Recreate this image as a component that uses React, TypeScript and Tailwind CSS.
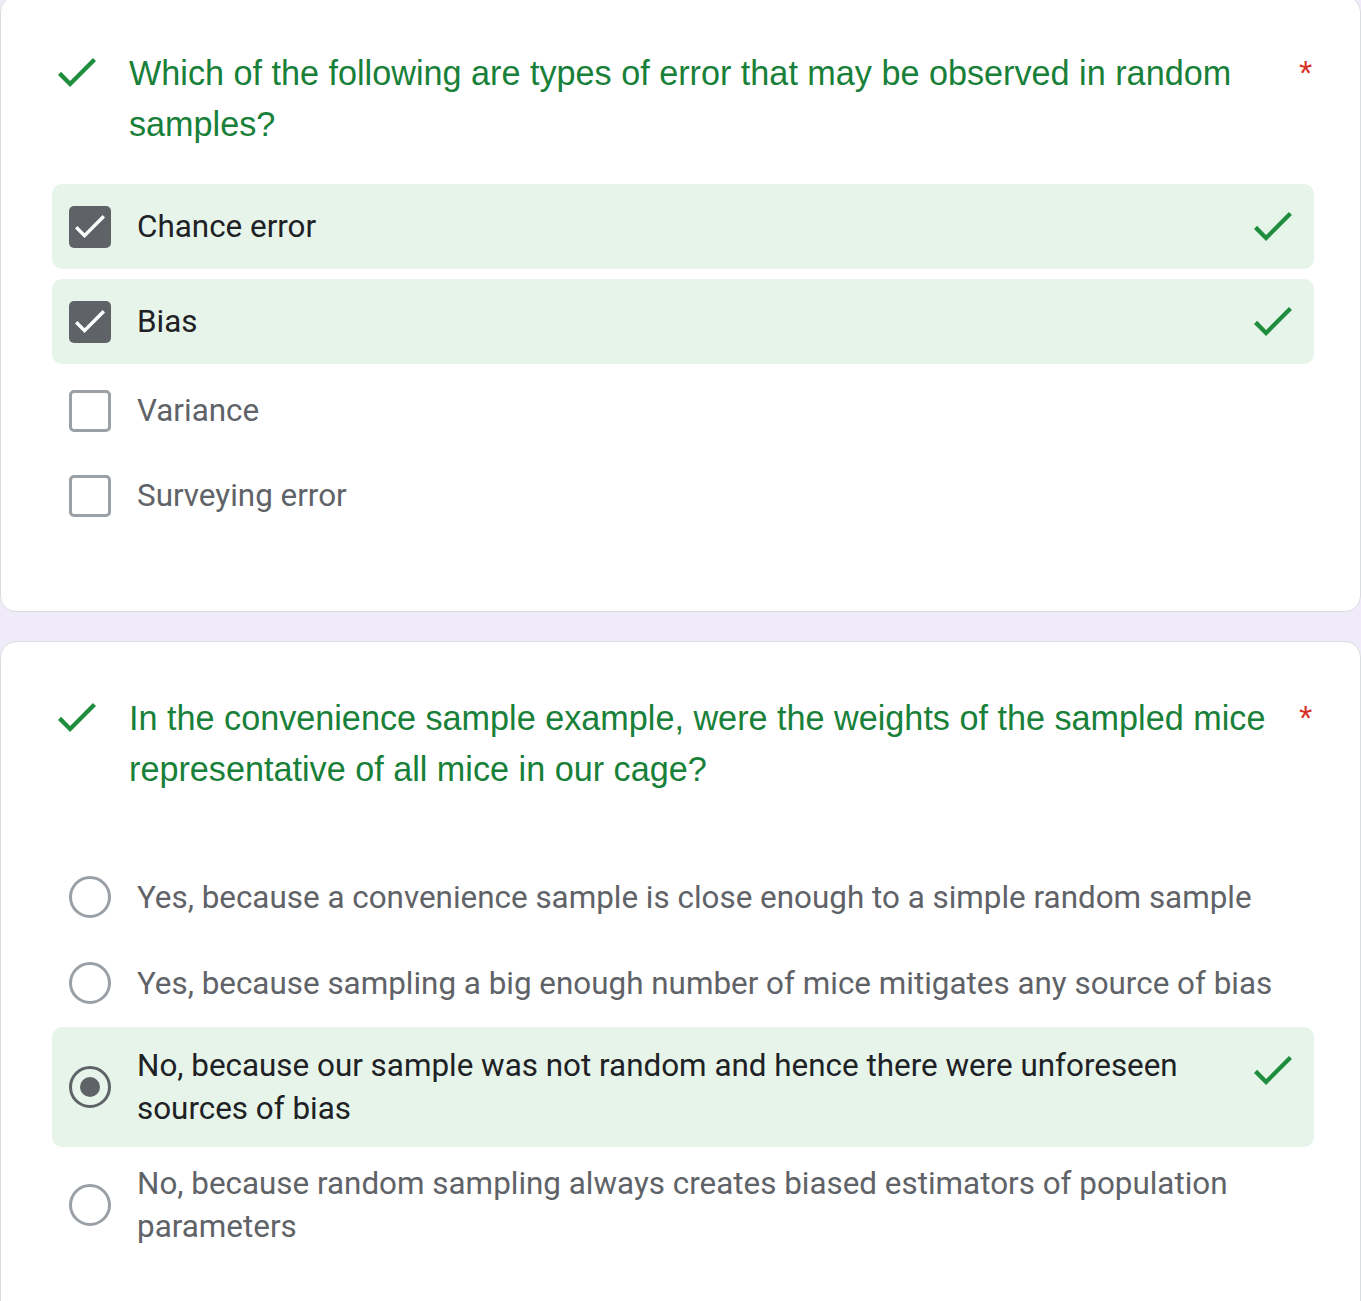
import React from "react";

type CheckOption = { label: string; checked: boolean; correct: boolean; wrap: string };
type RadioOption = { label: string; selected: boolean; correct: boolean; wrap: string };

const checkOptions: CheckOption[] = [
  { label: "Chance error", checked: true, correct: true, wrap: "h-[85px] mb-[10px] items-center" },
  { label: "Bias", checked: true, correct: true, wrap: "h-[85px] items-center" },
  { label: "Variance", checked: false, correct: false, wrap: "h-[85px] mt-[4px] items-center" },
  { label: "Surveying error", checked: false, correct: false, wrap: "h-[85px] items-center" },
];

const radioOptions: RadioOption[] = [
  {
    label: "Yes, because a convenience sample is close enough to a simple random sample",
    selected: false,
    correct: false,
    wrap: "h-[86px] items-center",
  },
  {
    label: "Yes, because sampling a big enough number of mice mitigates any source of bias",
    selected: false,
    correct: false,
    wrap: "h-[86px] items-center",
  },
  {
    label: "No, because our sample was not random and hence there were unforeseen sources of bias",
    selected: true,
    correct: true,
    wrap: "mt-[1px] py-[17px] items-center",
  },
  {
    label: "No, because random sampling always creates biased estimators of population parameters",
    selected: false,
    correct: false,
    wrap: "pt-[15px] pb-[16px] items-center",
  },
];

// material "check" glyph, cropped to its own bounds
function Tick({ className }: { className?: string }) {
  return (
    <svg viewBox="3.41 5.59 17.59 13.41" className={className} fill="currentColor" preserveAspectRatio="none">
      <path d="M9 16.17L4.83 12l-1.42 1.41L9 19 21 7l-1.41-1.41z" />
    </svg>
  );
}

function QuestionTitle({ children }: { children: React.ReactNode }) {
  return (
    <div className="flex items-start pl-[57px] pr-[47px] font-['Liberation_Sans',Arial,sans-serif] text-[34.2px] leading-[51px]">
      <Tick className="mt-[10px] h-[29px] w-[38px] shrink-0 text-[#1e8e3e]" />
      <div className="ml-[33px] flex-1 text-[#188038]">{children}</div>
      <span className="ml-[14px] w-[14px] text-[#d93025]">*</span>
    </div>
  );
}

function Checkbox({ checked }: { checked: boolean }) {
  if (checked) {
    return (
      <div className="flex size-[42px] shrink-0 items-center justify-center rounded-[5px] bg-[#5f6368]">
        <Tick className="h-[23px] w-[30px] text-white" />
      </div>
    );
  }
  return <div className="size-[42px] shrink-0 rounded-[5px] border-[3.5px] border-[#9aa0a6]" />;
}

function Radio({ selected }: { selected: boolean }) {
  if (selected) {
    return (
      <div className="flex size-[42px] shrink-0 items-center justify-center rounded-full border-[3.5px] border-[#5f6368]">
        <div className="size-[20px] rounded-full bg-[#5f6368]" />
      </div>
    );
  }
  return <div className="size-[42px] shrink-0 rounded-full border-[3.5px] border-[#9aa0a6]" />;
}

export default function App() {
  return (
    <div className="min-h-[1301px] overflow-hidden bg-[#f0ebf8] font-['Roboto',Arial,sans-serif]">
      <div className="-mt-1 rounded-[16px] border border-[#dadce0] bg-white pt-[51px] pb-[73px]">
        <QuestionTitle>Which of the following are types of error that may be observed in random samples?</QuestionTitle>

        <div className="mt-[34px] flex flex-col pl-[51px] pr-[46px]">
          {checkOptions.map((o) => (
            <div
              key={o.label}
              className={`${o.wrap} flex rounded-[10px] pl-[17px] pr-[22px] ${o.correct ? "bg-[#e6f4ea]" : ""}`}
            >
              <Checkbox checked={o.checked} />
              <span
                className={`ml-[26px] flex-1 text-[31.4px] leading-[43px] ${
                  o.checked ? "text-[#202124]" : "text-[#5f6368]"
                }`}
              >
                {o.label}
              </span>
              {o.correct ? <Tick className="h-[29px] w-[38px] shrink-0 text-[#1e8e3e]" /> : null}
            </div>
          ))}
        </div>
      </div>

      <div className="mt-[29px] rounded-[16px] border border-[#dadce0] bg-white pt-[51px] pb-[80px]">
        <QuestionTitle>
          In the convenience sample example, were the weights of the sampled mice representative of all mice in our cage?
        </QuestionTitle>

        <div className="mt-[59px] flex flex-col pl-[51px] pr-[46px]">
          {radioOptions.map((o) => (
            <div
              key={o.label}
              className={`${o.wrap} flex rounded-[10px] pl-[17px] pr-[22px] ${o.correct ? "bg-[#e6f4ea]" : ""}`}
            >
              <Radio selected={o.selected} />
              <span
                className={`ml-[26px] flex-1 text-[31.4px] leading-[43px] ${
                  o.selected ? "text-[#202124]" : "text-[#5f6368]"
                } ${o.correct ? "mr-[20px]" : ""}`}
              >
                {o.label}
              </span>
              {o.correct ? (
                <Tick className="mt-[12px] h-[29px] w-[38px] shrink-0 self-start text-[#1e8e3e]" />
              ) : null}
            </div>
          ))}
        </div>
      </div>
    </div>
  );
}
